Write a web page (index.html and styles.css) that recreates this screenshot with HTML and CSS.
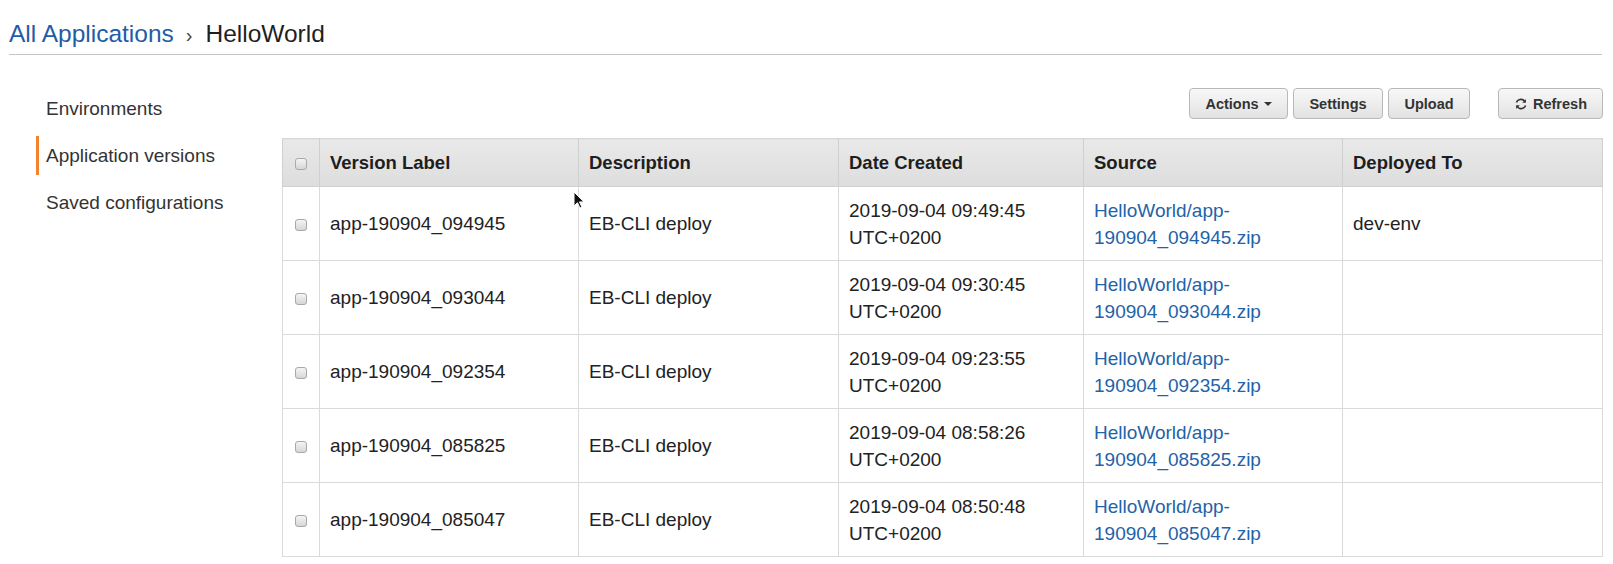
FILE: index.html
```html
<!DOCTYPE html>
<html>
<head>
<meta charset="utf-8">
<link rel="stylesheet" href="styles.css">
</head>
<body>
<div class="page">
  <div class="crumbs">
    <a class="crumb-link" href="#">All Applications</a>
    <span class="crumb-sep">›</span>
    <span class="crumb-current">HelloWorld</span>
  </div>
  <div class="main">
    <nav class="sidebar">
      <div class="nav-item">Environments</div>
      <div class="nav-item active">Application versions</div>
      <div class="nav-item">Saved configurations</div>
    </nav>
    <section class="content">
      <div class="toolbar">
        <button class="btn">Actions <span class="caret"></span></button>
        <button class="btn">Settings</button>
        <button class="btn">Upload</button>
        <button class="btn btn-refresh"><svg class="refresh-icon" viewBox="0 0 16 16" width="14" height="14"><path d="M13.6 2.4v4.2H9.4l1.6-1.6A4.4 4.4 0 0 0 3.7 6.6L1.9 5.9A6.4 6.4 0 0 1 12.4 3.6z" fill="#333"/><path d="M2.4 13.6V9.4h4.2L5 11a4.4 4.4 0 0 0 7.3-1.6l1.8.7A6.4 6.4 0 0 1 3.6 12.4z" fill="#333"/></svg> Refresh</button>
      </div>
      <table class="versions">
        <colgroup>
          <col class="c-check"><col class="c-label"><col class="c-desc"><col class="c-date"><col class="c-src"><col class="c-dep">
        </colgroup>
        <thead>
          <tr>
            <th class="check-cell"><span class="cbox"></span></th>
            <th>Version Label</th>
            <th>Description</th>
            <th>Date Created</th>
            <th>Source</th>
            <th>Deployed To</th>
          </tr>
        </thead>
        <tbody>
          <tr>
            <td class="check-cell"><span class="cbox"></span></td>
            <td>app-190904_094945</td>
            <td>EB-CLI deploy</td>
            <td>2019-09-04 09:49:45<br>UTC+0200</td>
            <td><a class="src" href="#">HelloWorld/app-<br>190904_094945.zip</a></td>
            <td>dev-env</td>
          </tr>
          <tr>
            <td class="check-cell"><span class="cbox"></span></td>
            <td>app-190904_093044</td>
            <td>EB-CLI deploy</td>
            <td>2019-09-04 09:30:45<br>UTC+0200</td>
            <td><a class="src" href="#">HelloWorld/app-<br>190904_093044.zip</a></td>
            <td></td>
          </tr>
          <tr>
            <td class="check-cell"><span class="cbox"></span></td>
            <td>app-190904_092354</td>
            <td>EB-CLI deploy</td>
            <td>2019-09-04 09:23:55<br>UTC+0200</td>
            <td><a class="src" href="#">HelloWorld/app-<br>190904_092354.zip</a></td>
            <td></td>
          </tr>
          <tr>
            <td class="check-cell"><span class="cbox"></span></td>
            <td>app-190904_085825</td>
            <td>EB-CLI deploy</td>
            <td>2019-09-04 08:58:26<br>UTC+0200</td>
            <td><a class="src" href="#">HelloWorld/app-<br>190904_085825.zip</a></td>
            <td></td>
          </tr>
          <tr>
            <td class="check-cell"><span class="cbox"></span></td>
            <td>app-190904_085047</td>
            <td>EB-CLI deploy</td>
            <td>2019-09-04 08:50:48<br>UTC+0200</td>
            <td><a class="src" href="#">HelloWorld/app-<br>190904_085047.zip</a></td>
            <td></td>
          </tr>
        </tbody>
      </table>
      <svg class="cursor" width="12" height="18" viewBox="0 0 12 18"><path d="M1 1v14l3.5-3.3 2.4 5.3 2-0.9-2.4-5.2H11z" fill="#111" stroke="#fff" stroke-width="1"/></svg>
    </section>
  </div>
</div>
</body>
</html>
```

FILE: styles.css
```css
* { box-sizing: border-box; }
html, body {
  margin: 0;
  padding: 0;
  background: #fff;
}
body {
  font-family: "Liberation Sans", Arial, Helvetica, sans-serif;
  color: #222;
}
.page {
  padding: 0 11px 0 9px;
}
.crumbs {
  display: flex;
  align-items: baseline;
  padding-top: 20px;
  padding-bottom: 5px;
  line-height: 28px;
  border-bottom: 1px solid #c4c4c4;
  font-size: 24.5px;
}
.crumb-link {
  color: #1f5ca6;
  text-decoration: none;
}
.crumb-sep {
  font-size: 20px;
  color: #444;
  margin: 0 13px 0 12px;
}
.crumb-current {
  color: #1f1f1f;
}
.main {
  display: flex;
  padding-left: 27px;
}
.sidebar {
  width: 246px;
  flex: none;
  padding-top: 34px;
  display: flex;
  flex-direction: column;
  gap: 8px;
}
.nav-item {
  height: 39px;
  line-height: 39px;
  padding-left: 7px;
  font-size: 19px;
  color: #333;
  border-left: 3px solid transparent;
}
.nav-item.active {
  border-left-color: #f5822f;
}
.content {
  flex: 1;
  padding-top: 33px;
  position: relative;
}
.toolbar {
  display: flex;
  justify-content: flex-end;
  gap: 5px;
  height: 31px;
  margin-bottom: 19px;
}
.btn {
  height: 31px;
  padding: 0 12px;
  font-family: "Liberation Sans", Arial, sans-serif;
  font-weight: bold;
  font-size: 14.5px;
  color: #333;
  background: linear-gradient(#f8f8f8, #e2e2e2);
  border: 1px solid #b8b8b8;
  border-radius: 4px;
  display: flex;
  align-items: center;
  gap: 5px;
}
.btn:nth-child(1) { width: 99px; justify-content: center; }
.btn:nth-child(2) { width: 90px; justify-content: center; }
.btn:nth-child(3) { width: 82px; justify-content: center; }
.btn-refresh {
  width: 105px;
  justify-content: center;
  margin-left: 23px;
}
.caret {
  display: inline-block;
  width: 0;
  height: 0;
  border-left: 4px solid transparent;
  border-right: 4px solid transparent;
  border-top: 4px solid #333;
  margin-top: 1px;
}
.refresh-icon {
  margin-top: 1px;
}
.versions {
  width: 1320px;
  border-collapse: collapse;
  table-layout: fixed;
  border: 1px solid #d4d4d4;
  font-size: 19px;
}
.c-check { width: 37px; }
.c-label { width: 259px; }
.c-desc { width: 260px; }
.c-date { width: 245px; }
.c-src { width: 259px; }
.c-dep { width: 260px; }
.versions th {
  height: 48px;
  text-align: left;
  font-weight: bold;
  font-size: 18.5px;
  color: #1e1e1e;
  padding: 0 10px;
  background: linear-gradient(#e9e9e9, #dddddd);
  border: 1px solid #d0d0d0;
  border-top-color: #d8d8d8;
}
.versions td {
  height: 74px;
  padding: 0 10px;
  line-height: 27px;
  color: #222;
  border: 1px solid #dadada;
  vertical-align: middle;
}
.versions .check-cell {
  padding: 0;
  text-align: center;
}
.cbox {
  display: inline-block;
  width: 12px;
  height: 12px;
  border: 1px solid #a9a9a9;
  border-radius: 3px;
  background: linear-gradient(#f4f4f4, #d6d6d6);
  vertical-align: middle;
}
.src {
  color: #1f63a8;
  text-decoration: none;
}
.cursor {
  position: absolute;
  left: 291px;
  top: 136px;
}
```
